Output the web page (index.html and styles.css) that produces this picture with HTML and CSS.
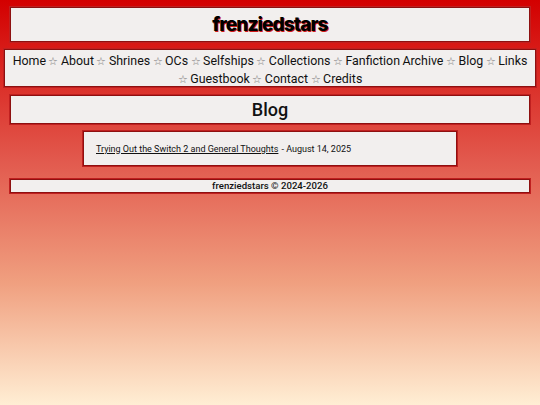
FILE: index.html
```html
<!DOCTYPE html>
<html>
<head>
<meta charset="utf-8">
<link rel="stylesheet" href="styles.css">
</head>
<body>
<div class="page">
  <header class="box site-title"><h1>frenziedstars</h1></header>
  <nav class="box nav">
    <a href="#">Home</a> <span class="star">☆</span> <a href="#">About</a> <span class="star">☆</span> <a href="#">Shrines</a> <span class="star">☆</span> <a href="#">OCs</a> <span class="star">☆</span> <a href="#">Selfships</a> <span class="star">☆</span> <a href="#">Collections</a> <span class="star">☆</span> <a href="#">Fanfiction Archive</a> <span class="star">☆</span> <a href="#">Blog</a> <span class="star">☆</span> <a href="#">Links</a> <span class="star">☆</span> <a href="#">Guestbook</a> <span class="star">☆</span> <a href="#">Contact</a> <span class="star">☆</span> <a href="#">Credits</a>
  </nav>
  <section class="box page-title"><h2>Blog</h2></section>
  <div class="post-wrap">
    <div class="box post">
      <a class="post-link" href="#">Trying Out the Switch 2 and General Thoughts</a> - August 14, 2025
    </div>
  </div>
  <footer class="box footer">frenziedstars © 2024-2026</footer>
</div>
</body>
</html>
```
FILE: styles.css
```css
html, body {
  margin: 0;
  padding: 0;
}
body {
  min-height: 405px;
  background: linear-gradient(to bottom, #d30000 0%, #e25a4e 40%, #f0a080 70%, #ffeed4 100%);
  font-family: Roboto, "Noto Sans", sans-serif;
  color: #111;
}
.page {
  display: flex;
  flex-direction: column;
  padding-top: 7px;
}
.box {
  background: #f2efee;
  border: 1px solid #8e1010;
  box-shadow: 0 0 0 1px #c02020;
  box-sizing: border-box;
}
.site-title {
  margin: 0 10px;
  height: 35px;
  display: flex;
  align-items: center;
  justify-content: center;
}
.site-title h1 {
  margin: 0;
  font-family: Inter, sans-serif;
  font-weight: 800;
  font-size: 19px;
  letter-spacing: -0.9px;
  color: #000;
  text-shadow: 1px 1px 0 #d21a1a;
}
.nav {
  margin: 7px 4px 0;
  height: 38px;
  padding: 2px 2px 0;
  text-align: center;
  font-size: 12.4px;
  word-spacing: -0.6px;
  line-height: 17px;
  color: #111;
}
.nav a {
  color: #111;
  text-decoration: none;
}
.star {
  color: #777;
  font-size: 11px;
}
.page-title {
  margin: 8px 10px 0;
  height: 29px;
  display: flex;
  align-items: center;
  justify-content: center;
}
.page-title h2 {
  margin: 0;
  font-size: 18px;
  font-weight: 500;
}
.post-wrap {
  display: flex;
  justify-content: center;
  margin-top: 7px;
}
.post {
  width: 374px;
  height: 35px;
  padding-left: 12px;
  display: flex;
  align-items: center;
  font-size: 9px;
}
.post-link {
  color: #111;
  text-decoration: underline;
  margin-right: 3px;
}
.footer {
  margin: 13px 10px 0;
  height: 14px;
  text-align: center;
  font-size: 9.6px;
  font-weight: 500;
  line-height: 12px;
}
```
